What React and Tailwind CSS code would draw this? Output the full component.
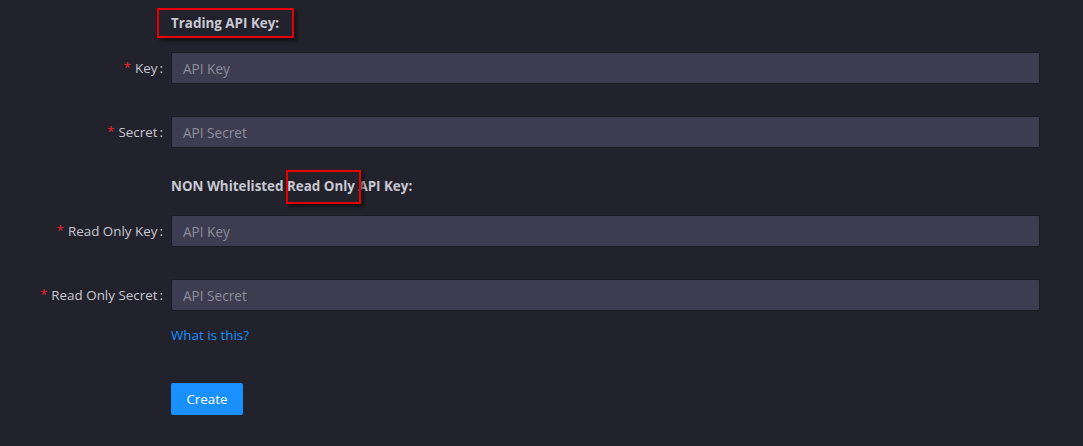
import React from "react";

const font = { fontFamily: '"Open Sans", "Noto Sans", sans-serif' };

const Field = ({ label, placeholder }) => (
    <div className="flex items-center">
        <label className="w-[171px] shrink-0 flex justify-end items-center pr-2 text-[13.4px] text-[#c8c8d2]">
            <span className="text-[#f5222d] mr-1 text-[13px]">*</span>
            {label}
            <span className="ml-[2px]">:</span>
        </label>
        <input
            className="w-[869px] h-8 bg-[#3d3c50] border border-[#1b1b23] rounded-[2px] px-[11px] text-[13.6px] text-[#c8c8d2] placeholder-[#8d8c9c] outline-none"
            placeholder={placeholder}
        />
    </div>
);

const Highlight = ({ className }) => (
    <div className={`absolute border-2 border-[#e60000] shadow-[3px_3px_3px_rgba(0,0,0,0.45)] pointer-events-none ${className}`} />
);

export default function App() {
    return (
        <div className="w-[1083px] h-[446px] bg-[#22222c] overflow-hidden" style={font}>
            <div className="relative pt-3">
                <div className="ml-[171px] h-[22px] leading-[23px] text-[13.4px] font-bold text-[#c8c8d2]">
                    Trading API Key:
                </div>
                <Highlight className="left-[157px] top-[8px] w-[137px] h-[30px]" />

                <div className="mt-[18px]">
                    <Field label="Key" placeholder="API Key" />
                </div>
                <div className="mt-[32px]">
                    <Field label="Secret" placeholder="API Secret" />
                </div>

                <div className="relative mt-[27px] ml-[171px] h-[22px] leading-[23px] text-[13.4px] font-bold text-[#c8c8d2]">
                    NON Whitelisted Read Only API Key:
                </div>
                <Highlight className="left-[286px] top-[170px] w-[75px] h-[34px]" />

                <div className="mt-[18px]">
                    <Field label="Read Only Key" placeholder="API Key" />
                </div>
                <div className="mt-[32px]">
                    <Field label="Read Only Secret" placeholder="API Secret" />
                </div>

                <div className="ml-[171px] mt-[13px] h-[22px] leading-[22px] text-[13.4px]">
                    <a href="#" className="text-[#1890ff]">What is this?</a>
                </div>

                <div className="ml-[171px] mt-[37px]">
                    <button className="w-[72px] h-8 bg-[#1890ff] text-white text-[13.4px] rounded-[2px]">
                        Create
                    </button>
                </div>
            </div>
        </div>
    );
}
